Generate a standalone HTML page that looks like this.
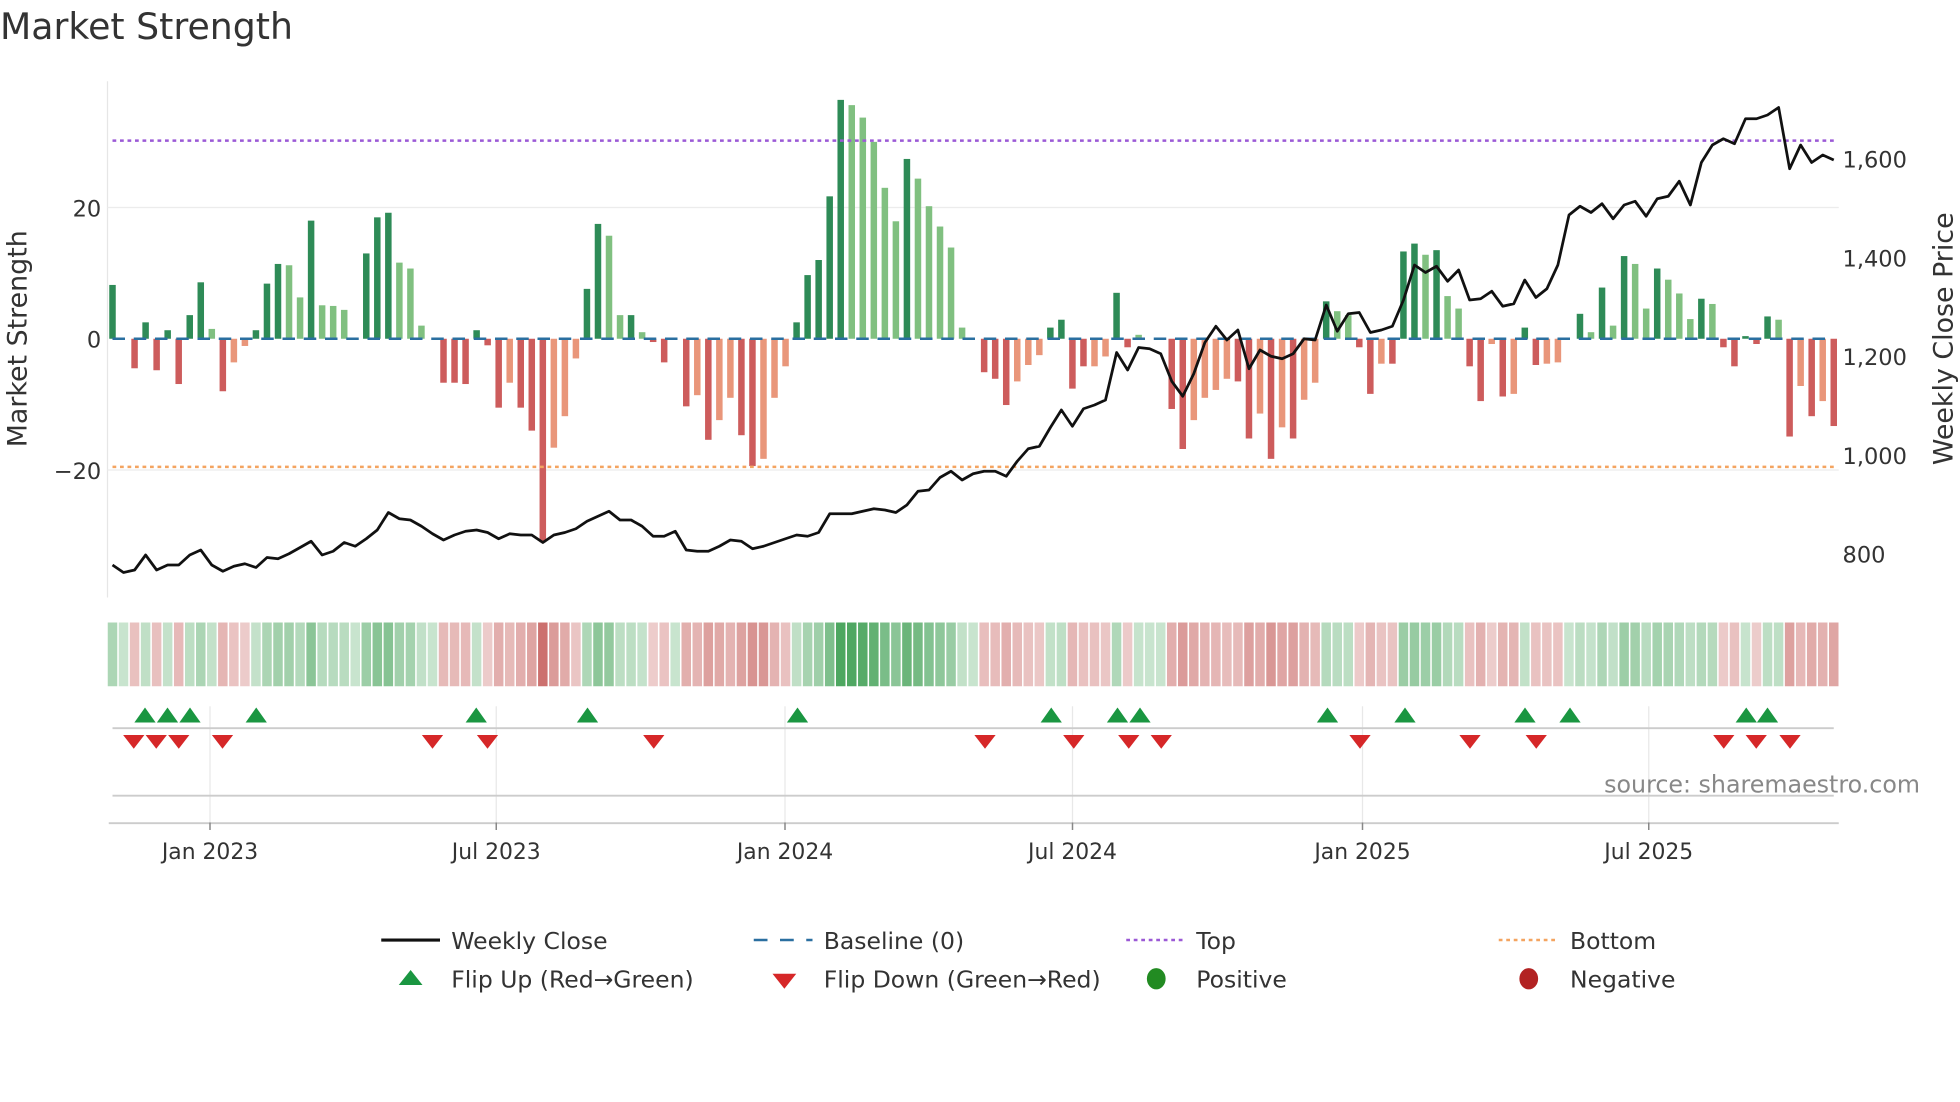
<!DOCTYPE html>
<html><head><meta charset="utf-8"><style>
html,body{margin:0;padding:0;background:#fff;}
svg{display:block;font-family:"DejaVu Sans","Liberation Sans",sans-serif;}
</style></head><body>
<svg id="s" width="1960" height="1102" viewBox="0 0 1568 881.6" xmlns="http://www.w3.org/2000/svg">
<text x="0" y="31" font-size="29" fill="#333">Market Strength</text>
<line x1="86" y1="65" x2="86" y2="478" stroke="#e6e6e6" stroke-width="1"/>
<line x1="86" y1="166" x2="1471" y2="166" stroke="#ececec" stroke-width="1"/>
<line x1="86" y1="376" x2="1471" y2="376" stroke="#ececec" stroke-width="1"/>
<g id="bars"></g>
<line x1="90" y1="271" x2="1467" y2="271" stroke="#2a6fa0" stroke-width="2" stroke-dasharray="10,7"/>
<line x1="90" y1="112.5" x2="1470" y2="112.5" stroke="#9b59d6" stroke-width="2" stroke-dasharray="3,3"/>
<line x1="90" y1="373.5" x2="1470" y2="373.5" stroke="#f4a460" stroke-width="2" stroke-dasharray="3,3"/>
<polyline id="price" fill="none" stroke="#111" stroke-width="2.2" stroke-linejoin="round"/>
<g font-size="18" fill="#333">
<text x="81" y="173" text-anchor="end">20</text>
<text x="81" y="278" text-anchor="end">0</text>
<text x="81" y="383" text-anchor="end">−20</text>
<text x="1474" y="134">1,600</text>
<text x="1474" y="213">1,400</text>
<text x="1474" y="292">1,200</text>
<text x="1474" y="371">1,000</text>
<text x="1474" y="450">800</text>
<text transform="translate(21,271) rotate(-90)" text-anchor="middle" font-size="21.5">Market Strength</text>
<text transform="translate(1562,271) rotate(-90)" text-anchor="middle" font-size="21.5">Weekly Close Price</text>
</g>
<g id="heat"></g>
<g stroke="#e8e8e8" stroke-width="1">
<line x1="168" y1="565" x2="168" y2="658"/><line x1="397" y1="565" x2="397" y2="658"/><line x1="628" y1="565" x2="628" y2="658"/><line x1="858" y1="565" x2="858" y2="658"/><line x1="1090" y1="565" x2="1090" y2="658"/><line x1="1319" y1="565" x2="1319" y2="658"/>
</g>
<line x1="90" y1="582.5" x2="1467" y2="582.5" stroke="#ccc" stroke-width="1.5"/>
<line x1="90" y1="636.5" x2="1467" y2="636.5" stroke="#ccc" stroke-width="1.5"/>
<line x1="87" y1="658.5" x2="1471" y2="658.5" stroke="#ccc" stroke-width="1.5"/>
<g id="marks"></g>
<text x="1536" y="634" text-anchor="end" font-size="19" fill="#888">source: sharemaestro.com</text>
<g stroke="#888" stroke-width="1.2">
<line x1="168" y1="658" x2="168" y2="664"/><line x1="397" y1="658" x2="397" y2="664"/><line x1="628" y1="658" x2="628" y2="664"/><line x1="858" y1="658" x2="858" y2="664"/><line x1="1090" y1="658" x2="1090" y2="664"/><line x1="1319" y1="658" x2="1319" y2="664"/>
</g>
<g font-size="17.5" fill="#333" text-anchor="middle">
<text x="168" y="687">Jan 2023</text><text x="397" y="687">Jul 2023</text><text x="628" y="687">Jan 2024</text><text x="858" y="687">Jul 2024</text><text x="1090" y="687">Jan 2025</text><text x="1319" y="687">Jul 2025</text>
</g>
<g font-size="18.8" fill="#333">
<line x1="305" y1="752" x2="352" y2="752" stroke="#111" stroke-width="2.5"/>
<text x="361" y="759">Weekly Close</text>
<line x1="603" y1="752" x2="650" y2="752" stroke="#2a6fa0" stroke-width="2" stroke-dasharray="11,10"/>
<text x="659" y="759">Baseline (0)</text>
<line x1="901" y1="752" x2="946" y2="752" stroke="#9b59d6" stroke-width="2" stroke-dasharray="3,3"/>
<text x="957" y="759">Top</text>
<line x1="1199" y1="752" x2="1244" y2="752" stroke="#f4a460" stroke-width="2" stroke-dasharray="3,3"/>
<text x="1256" y="759">Bottom</text>
<polygon points="319,788 338,788 328.5,776" fill="#1a9641"/>
<text x="361" y="790">Flip Up (Red→Green)</text>
<polygon points="618,779 637,779 627.5,791" fill="#d62728"/>
<text x="659" y="790">Flip Down (Green→Red)</text>
<ellipse cx="925" cy="783" rx="7.5" ry="8.5" fill="#228b22"/>
<text x="957" y="790">Positive</text>
<ellipse cx="1223" cy="783" rx="7.5" ry="8.5" fill="#b22222"/>
<text x="1256" y="790">Negative</text>
</g>
</svg>
<script>
var v="8.2d,0d,-4.5d,2.5d,-4.8d,1.3d,-6.9d,3.6d,8.6d,1.5l,-8d,-3.6l,-1.1l,1.3d,8.4d,11.4d,11.2l,6.3l,18d,5.1l,5l,4.4l,0d,13d,18.5d,19.2d,11.6l,10.7l,2l,0d,-6.7d,-6.7d,-6.9d,1.3d,-1d,-10.5d,-6.7l,-10.5d,-14d,-31d,-16.6l,-11.8l,-3l,7.6d,17.5d,15.7l,3.6l,3.6d,1l,-0.5d,-3.6d,0d,-10.3d,-8.6l,-15.4d,-12.4l,-9l,-14.7d,-19.4d,-18.3l,-9l,-4.2l,2.5d,9.7d,12d,21.7d,36.4d,35.6l,33.7l,30l,23l,17.9l,27.4d,24.4l,20.2l,17.1l,13.9l,1.7l,0d,-5.1d,-6.1d,-10.1d,-6.5l,-4l,-2.5l,1.7d,2.9d,-7.6d,-4.2d,-4.2l,-2.7l,7d,-1.3d,0.6l,0d,0d,-10.7d,-16.8d,-12.4l,-9l,-7.8l,-6.1l,-6.5d,-15.2d,-11.4l,-18.3d,-13.5l,-15.2d,-9.3l,-6.7l,5.7d,4.2l,3.6l,-1.3d,-8.4d,-3.8l,-3.8d,13.3d,14.5d,12.8l,13.5d,6.5l,4.6l,-4.2d,-9.5d,-0.8l,-8.8d,-8.4l,1.7d,-4d,-3.8l,-3.6l,0d,3.8d,1l,7.8d,2l,12.6d,11.4l,4.6l,10.7d,9l,6.9l,3l,6.1d,5.3l,-1.3d,-4.2d,0.4d,-0.8d,3.4d,2.9l,-14.9d,-7.2l,-11.8d,-9.5l,-13.3d".split(",");
var py=[452,458,456,444,456,452,452,444,440,452,457,453,451,454,446,447,443,438,433,444,441,434,437,431,424,410,415,416,421,427,432,428,425,424,426,431,427,428,428,434,428,426,423,417,413,409,416,416,421,429,429,425,440,441,441,437,432,433,439,437,434,431,428,429,426,411,411,411,409,407,408,410,404,393,392,382,377,384,379,377,377,381,369,359,357,342,328,341,327,324,320,282,296,278,279,283,305,317,299,274,261,272,264,295,280,285,287,283,271,272,244,265,251,250,266,264,261,240,212,218,213,225,216,240,239,233,245,243,224,238,231,212,172,165,170,163,175,164,161,173,159,157,145,164,130,116,111,115,95,95,92,86,135,116,130,124,128];
var ns="http://www.w3.org/2000/svg",B=document.getElementById("bars"),H=document.getElementById("heat"),n=v.length,st=(1467-90)/(n-1);
function R(g,x,y,w,h,f,o){var r=document.createElementNS(ns,"rect");r.setAttribute("x",x);r.setAttribute("y",y);r.setAttribute("width",w);r.setAttribute("height",h);r.setAttribute("fill",f);if(o!=null)r.setAttribute("fill-opacity",o);g.appendChild(r);}
var pts=[];
for(var i=0;i<n;i++){var s=v[i],d=s.slice(-1),val=parseFloat(s),x=90+i*st;
 var h=val*5.25,col;
 if(val>=0)col=d=="d"?"#2e8b57":"#80c080";else col=d=="d"?"#cd5c5c":"#e9967a";
 if(val!=0){if(val>0)R(B,x-2.6,271-h,5.2,h,col);else R(B,x-2.6,271,5.2,-h,col);}
 var a=0.28+0.62*Math.min(Math.abs(val)/36,1);
 R(H,x-3.8,498,7.6,51,val>=0?"#3a9d4f":"#c0504d",a);
 pts.push(x.toFixed(1)+","+(py[i]||128));}
document.getElementById("price").setAttribute("points",pts.join(" "));
var M=document.getElementById("marks");
[116,134,152,205,381,470,638,841,894,912,1062,1124,1220,1256,1397,1414].forEach(function(x){var p=document.createElementNS(ns,"polygon");p.setAttribute("points",(x-8.5)+",578 "+(x+8.5)+",578 "+x+",566");p.setAttribute("fill","#1a9641");M.appendChild(p);});
[107,125,143,178,346,390,523,788,859,903,929,1088,1176,1229,1379,1405,1432].forEach(function(x){var p=document.createElementNS(ns,"polygon");p.setAttribute("points",(x-8.5)+",588 "+(x+8.5)+",588 "+x+",599");p.setAttribute("fill","#d62728");M.appendChild(p);});
</script>
</body></html>
